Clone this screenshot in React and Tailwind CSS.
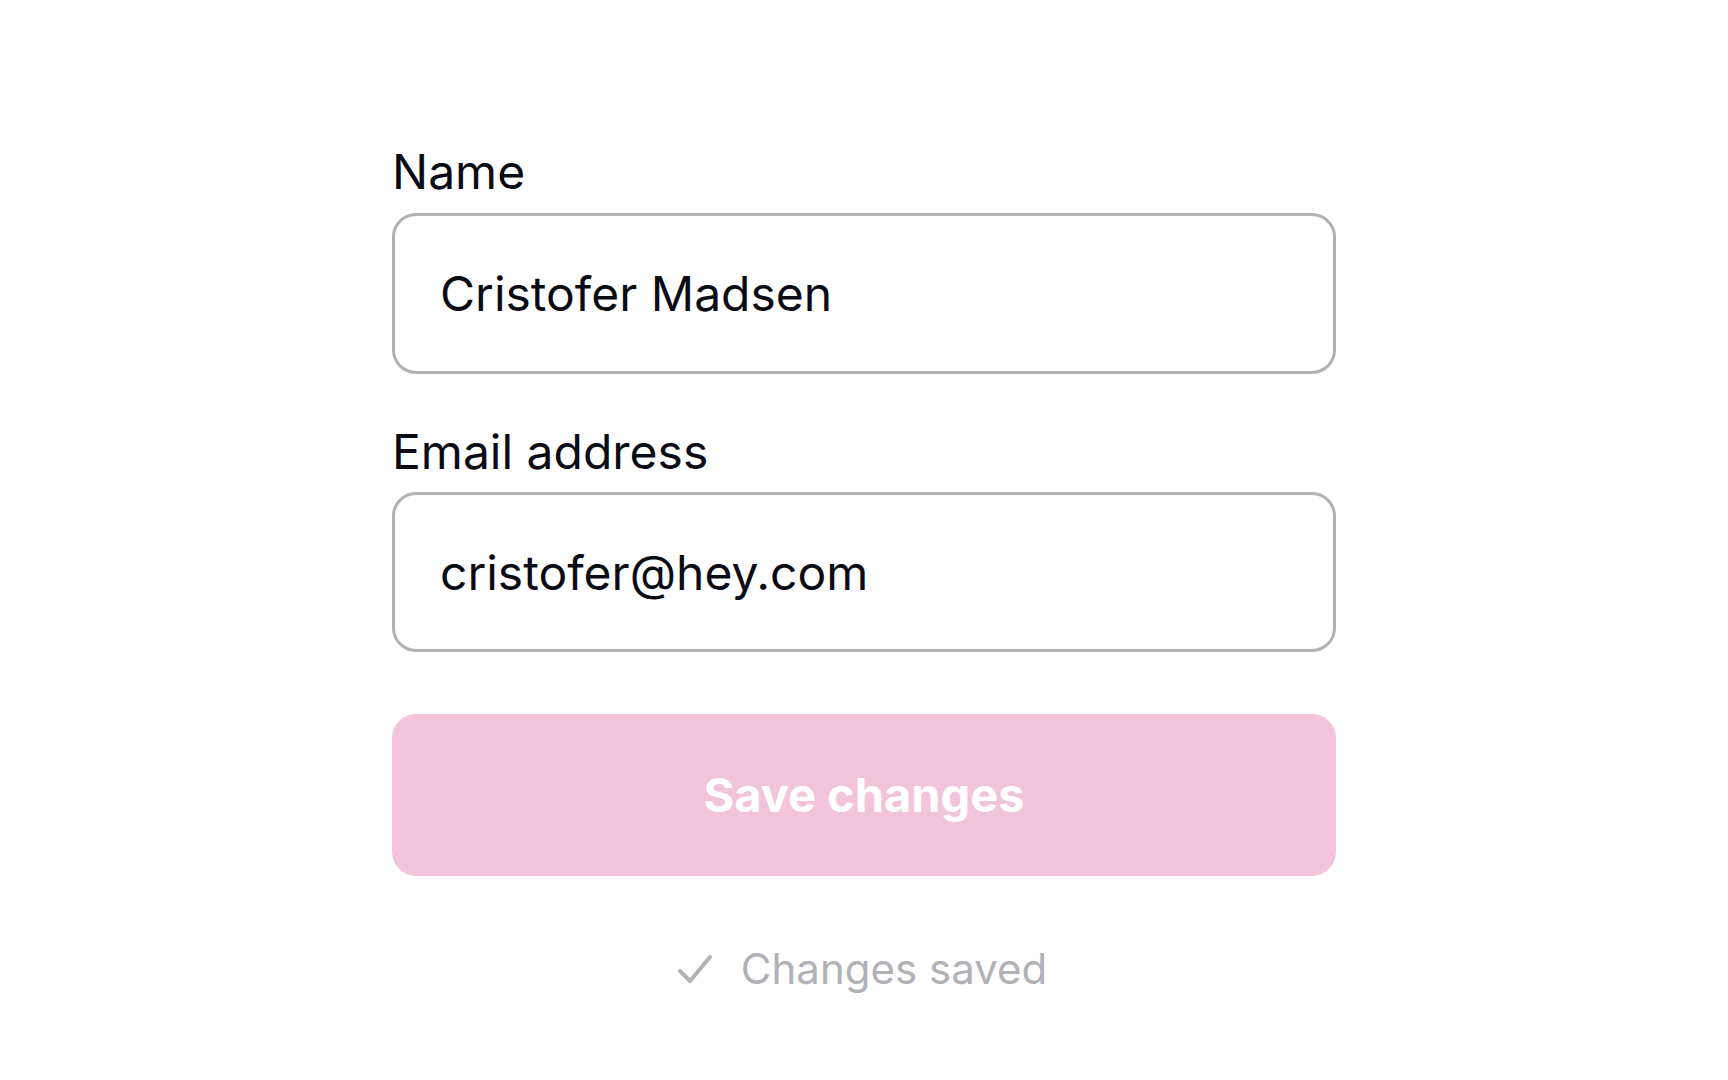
export default function App() {
  return (
    <div className="min-h-screen bg-white flex justify-center" style={{ fontFamily: 'Inter, "Noto Sans", sans-serif' }}>
      <form className="w-[944px] pt-[136px] flex flex-col" onSubmit={e => e.preventDefault()}>
        <label className="text-[48px] leading-[72px] text-[#0b0b14] mb-[5px]">Name</label>
        <input
          defaultValue="Cristofer Madsen"
          className="h-[161px] w-full border-[3px] border-[#b1b1b6] rounded-[24px] px-[45px] text-[48px] text-[#0b0b14] outline-none"
        />

        <label className="mt-[42px] text-[48px] leading-[72px] text-[#0b0b14] mb-[4px]">Email address</label>
        <input
          defaultValue="cristofer@hey.com"
          className="h-[160px] w-full border-[3px] border-[#b1b1b6] rounded-[24px] px-[45px] text-[48px] text-[#0b0b14] outline-none"
        />

        <button
          type="submit"
          className="mt-[62px] h-[162px] w-full rounded-[24px] bg-[#f1c4d9] text-white text-[47px] font-bold"
        >
          Save changes
        </button>

        <div className="mt-[61px] flex items-center justify-center gap-[28px] pr-[4px] text-[#b1b1b6]">
          <svg width="36" height="32" viewBox="0 0 36 32" fill="none" stroke="currentColor" strokeWidth="4" strokeLinecap="round" strokeLinejoin="round">
            <path d="M3 18l10 10L33 4" />
          </svg>
          <span className="text-[42px] leading-[64px]">Changes saved</span>
        </div>
      </form>
    </div>
  )
}
